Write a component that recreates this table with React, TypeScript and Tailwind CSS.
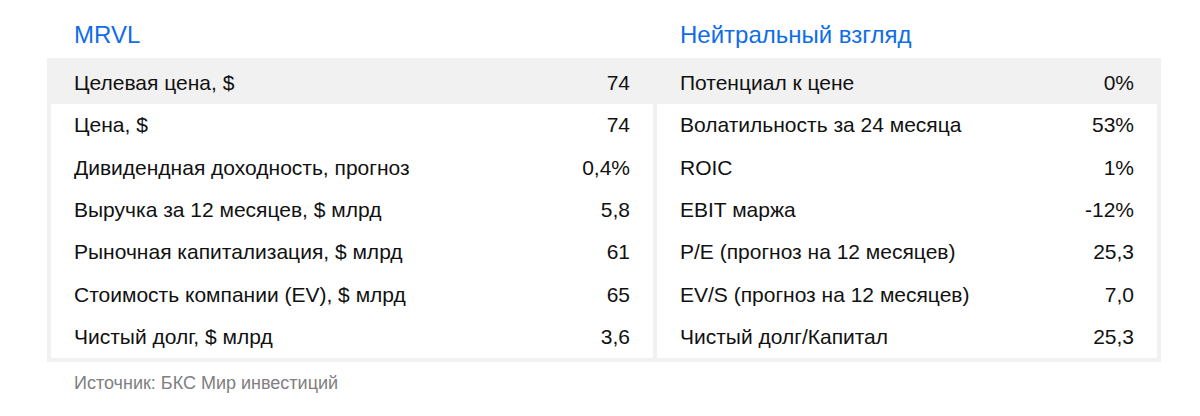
const left = [
  ["Цена, $", "74"],
  ["Дивидендная доходность, прогноз", "0,4%"],
  ["Выручка за 12 месяцев, $ млрд", "5,8"],
  ["Рыночная капитализация, $ млрд", "61"],
  ["Стоимость компании (EV), $ млрд", "65"],
  ["Чистый долг, $ млрд", "3,6"],
];

const right = [
  ["Волатильность за 24 месяца", "53%"],
  ["ROIC", "1%"],
  ["EBIT маржа", "-12%"],
  ["P/E (прогноз на 12 месяцев)", "25,3"],
  ["EV/S (прогноз на 12 месяцев)", "7,0"],
  ["Чистый долг/Капитал", "25,3"],
];

function Cell({ label, value, white }: { label: string; value: string; white?: boolean }) {
  return (
    <div
      className={`flex items-center justify-between px-[23px] ${white ? "h-[42.33px] bg-white" : "h-[42px]"}`}
    >
      <span>{label}</span>
      <span>{value}</span>
    </div>
  );
}

export default function App() {
  return (
    <div
      className="w-[1200px] h-[416px] bg-white text-[21px] text-[#111]"
      style={{ fontFamily: '"Liberation Sans", Arial, sans-serif' }}
    >
      <div className="ml-[47px] w-[1114px]">
        {/* Заголовки */}
        <div className="grid h-[58px] grid-cols-[606px_508px] items-center pt-[12px] text-[24px] text-[#0f6de8]">
          <div className="pl-[27px]">MRVL</div>
          <div className="pl-[27px]">Нейтральный взгляд</div>
        </div>

        {/* Таблица */}
        <div className="bg-[#f1f1f1] p-1">
          <div className="grid grid-cols-[602px_500px] gap-x-1">
            <Cell label="Целевая цена, $" value="74" />
            <Cell label="Потенциал к цене" value="0%" />
            <div className="flex flex-col">
              {left.map(([l, v]) => (
                <Cell key={l} label={l} value={v} white />
              ))}
            </div>
            <div className="flex flex-col">
              {right.map(([l, v]) => (
                <Cell key={l} label={l} value={v} white />
              ))}
            </div>
          </div>
        </div>

        <div className="pl-[27px] pt-[8px] text-[18px] text-[#808080]">
          Источник: БКС Мир инвестиций
        </div>
      </div>
    </div>
  );
}
